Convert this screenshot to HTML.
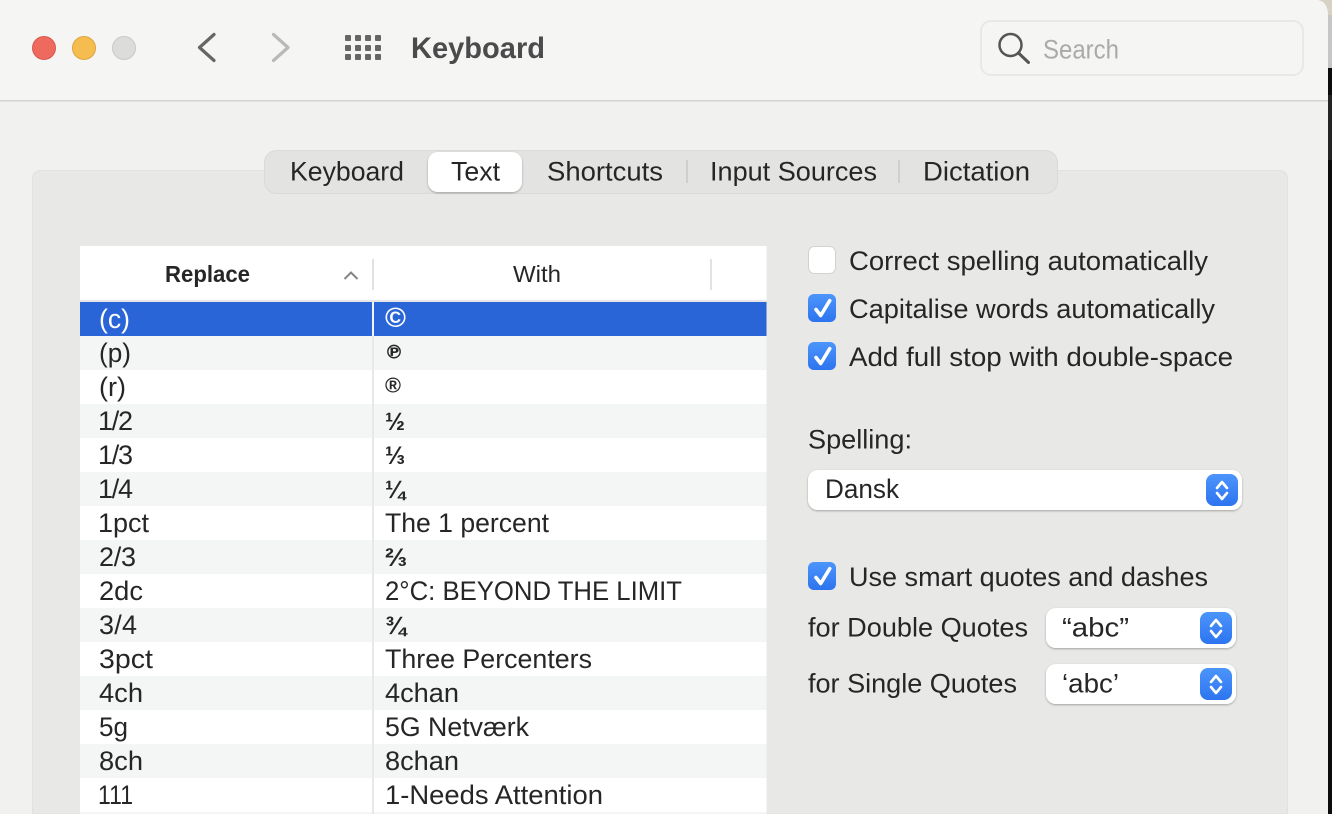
<!DOCTYPE html>
<html><head><meta charset="utf-8"><style>
html,body{margin:0;padding:0;background:#0c0c0c;width:1332px;height:814px;overflow:hidden}
svg{display:block}
text{font-family:"Liberation Sans","DejaVu Sans",sans-serif;font-size:27px;fill:#262626}
.b{font-weight:bold}
.sym{font-family:"DejaVu Sans","Liberation Sans",sans-serif;font-weight:bold;font-size:19px}
.fr{font-family:"Liberation Sans","DejaVu Sans",sans-serif;font-weight:bold;font-size:25px}
</style></head><body>
<svg width="1332" height="814" viewBox="0 0 1332 814" xmlns="http://www.w3.org/2000/svg">
<defs>
<linearGradient id="bl" x1="0" y1="0" x2="0" y2="1"><stop offset="0" stop-color="#4c95fb"/><stop offset="1" stop-color="#2d74ef"/></linearGradient>
<filter id="sh" x="-5%" y="-20%" width="110%" height="150%"><feDropShadow dx="0" dy="1" stdDeviation="1" flood-color="#000" flood-opacity=".3"/></filter>
<symbol id="chk" overflow="visible"><rect width="28" height="28" rx="6" fill="url(#bl)"/><path d="M8 15.500l4.700 6L21.700 6.700" fill="none" stroke="#fff" stroke-width="3.600" stroke-linecap="round" stroke-linejoin="round"/></symbol>
<symbol id="upd" overflow="visible"><rect width="32" height="32" rx="8" fill="url(#bl)"/><path d="M11 14l5-6 5 6M11 19l5 6 5-6" fill="none" stroke="#fff" stroke-width="2.600" stroke-linecap="round" stroke-linejoin="round"/></symbol>
</defs>
<!-- desktop strip -->
<rect x="1300" y="0" width="32" height="15" fill="#d8d2c5"/>
<rect x="1328" y="15" width="4" height="53" fill="#c6c6c6"/>
<rect x="1328" y="68" width="4" height="746" fill="#0c0c0c"/>
<rect x="1328" y="95" width="4" height="65" fill="#232323"/>
<!-- window -->
<path d="M0 0H1318Q1328 2 1328 16V814H0Z" fill="#f1f1f0"/>
<path d="M0 0H1318Q1328 2 1328 16V100H0Z" fill="#f5f5f4"/>
<rect x="0" y="100" width="1328" height="1.500" fill="#d2d2d0"/>
<!-- traffic lights -->
<circle cx="44" cy="48" r="11.500" fill="#ee6a5f" stroke="#d9584e"/>
<circle cx="84" cy="48" r="11.500" fill="#f5bd4f" stroke="#dca43c"/>
<circle cx="124" cy="48" r="11.500" fill="#dcdcdb" stroke="#c8c8c7"/>
<!-- nav -->
<path d="M214 34.500L199.500 47.500L214 60.500" fill="none" stroke="#666" stroke-width="3.200" stroke-linecap="round" stroke-linejoin="round"/>
<path d="M273.500 34.500L288 47.500L273.500 60.500" fill="none" stroke="#b9b9b9" stroke-width="3.200" stroke-linecap="round" stroke-linejoin="round"/>
<g fill="#666">
<rect x="345" y="35" width="6" height="6" rx="1"/><rect x="355" y="35" width="6" height="6" rx="1"/><rect x="365" y="35" width="6" height="6" rx="1"/><rect x="375" y="35" width="6" height="6" rx="1"/>
<rect x="345" y="45" width="6" height="6" rx="1"/><rect x="355" y="45" width="6" height="6" rx="1"/><rect x="365" y="45" width="6" height="6" rx="1"/><rect x="375" y="45" width="6" height="6" rx="1"/>
<rect x="345" y="54" width="6" height="6" rx="1"/><rect x="355" y="54" width="6" height="6" rx="1"/><rect x="365" y="54" width="6" height="6" rx="1"/><rect x="375" y="54" width="6" height="6" rx="1"/>
</g>
<text x="411" y="58" class="b" style="font-size:30px;fill:#4b4b4b" textLength="134" lengthAdjust="spacingAndGlyphs">Keyboard</text>
<!-- search -->
<rect x="981" y="21" width="322" height="54" rx="10" fill="#f5f5f4" stroke="#e8e8e7" stroke-width="2"/>
<circle cx="1010.500" cy="45" r="11" fill="none" stroke="#555" stroke-width="2.500"/>
<path d="M1018.500 53L1028.500 62.500" stroke="#555" stroke-width="3" stroke-linecap="round"/>
<text x="1043" y="58.500" style="fill:#aaaaaa" textLength="76" lengthAdjust="spacingAndGlyphs">Search</text>
<!-- panel -->
<path d="M32.500 814V179.500Q32.500 170.500 41.500 170.500H1278.500Q1287.500 170.500 1287.500 179.500V814Z" fill="#e8e8e7" stroke="#e1e1e0"/>
<!-- tabs -->
<rect x="264.500" y="150.500" width="793" height="43" rx="12" fill="#e3e3e2" stroke="#dadad9"/>
<rect x="428" y="152" width="94" height="40" rx="10" fill="#fff" filter="url(#sh)"/>
<rect x="686" y="160" width="2" height="23" fill="#cfcfce"/>
<rect x="898" y="160" width="2" height="23" fill="#cfcfce"/>
<text x="290" y="180.500" textLength="114" lengthAdjust="spacingAndGlyphs">Keyboard</text>
<text x="451" y="180.500" textLength="49" lengthAdjust="spacingAndGlyphs">Text</text>
<text x="547" y="180.500" textLength="116" lengthAdjust="spacingAndGlyphs">Shortcuts</text>
<text x="710" y="180.500" textLength="167" lengthAdjust="spacingAndGlyphs">Input Sources</text>
<text x="923" y="180.500" textLength="107" lengthAdjust="spacingAndGlyphs">Dictation</text>
<!-- table -->
<rect x="80" y="246" width="686.500" height="568" fill="#fff"/>
<rect x="80" y="300" width="686.500" height="2" fill="#e6e6e6"/>
<rect x="372" y="259" width="2" height="31" fill="#e2e2e2"/>
<rect x="710" y="259" width="2" height="31" fill="#e2e2e2"/>
<text x="165" y="282" class="b" style="font-size:23px" textLength="85" lengthAdjust="spacingAndGlyphs">Replace</text>
<text x="513" y="282" style="font-size:23px" textLength="48" lengthAdjust="spacingAndGlyphs">With</text>
<path d="M344.500 279L351 272.500L357.500 279" fill="none" stroke="#858585" stroke-width="2"/>
<g fill="#f4f5f5">
<rect x="80" y="336" width="686.500" height="34"/><rect x="80" y="404" width="686.500" height="34"/><rect x="80" y="472" width="686.500" height="34"/><rect x="80" y="540" width="686.500" height="34"/><rect x="80" y="608" width="686.500" height="34"/><rect x="80" y="676" width="686.500" height="34"/><rect x="80" y="744" width="686.500" height="34"/><rect x="80" y="812" width="686.500" height="2"/>
</g>
<rect x="372" y="302" width="2" height="512" fill="#e8e8e8"/>
<rect x="80" y="302" width="686.500" height="34" fill="#2a65d8"/>
<rect x="372" y="302" width="2" height="34" fill="#f0f4fb"/>
<text x="99" y="328" style="fill:#fff" textLength="31" lengthAdjust="spacingAndGlyphs">(c)</text>
<text x="385" y="327" class="fr" style="fill:#fff;font-size:28px" textLength="21" lengthAdjust="spacingAndGlyphs">©</text>
<text x="99" y="362" textLength="32" lengthAdjust="spacingAndGlyphs">(p)</text>
<text x="384.500" y="358.500" class="sym">℗</text>
<text x="99" y="396" textLength="27" lengthAdjust="spacingAndGlyphs">(r)</text>
<text x="385" y="392.500" class="fr" style="font-size:21px" textLength="16" lengthAdjust="spacingAndGlyphs">®</text>
<text x="98" y="430" textLength="35" lengthAdjust="spacing">1/2</text>
<text x="385" y="430" class="fr" textLength="20" lengthAdjust="spacingAndGlyphs">½</text>
<text x="98" y="464" textLength="35" lengthAdjust="spacing">1/3</text>
<text x="385" y="464" class="fr" textLength="20" lengthAdjust="spacingAndGlyphs">⅓</text>
<text x="98" y="498" textLength="35" lengthAdjust="spacing">1/4</text>
<text x="385" y="498" class="fr" textLength="20" lengthAdjust="spacingAndGlyphs">¼</text>
<text x="98" y="532" textLength="51" lengthAdjust="spacing">1pct</text>
<text x="385" y="532" textLength="164" lengthAdjust="spacingAndGlyphs">The 1 percent</text>
<text x="99" y="566" textLength="37" lengthAdjust="spacing">2/3</text>
<text x="385" y="566" class="fr" textLength="22" lengthAdjust="spacingAndGlyphs">⅔</text>
<text x="99" y="600" textLength="44" lengthAdjust="spacingAndGlyphs">2dc</text>
<text x="385" y="600" textLength="297" lengthAdjust="spacingAndGlyphs">2°C: BEYOND THE LIMIT</text>
<text x="99" y="634" textLength="38" lengthAdjust="spacing">3/4</text>
<text x="385" y="634" class="fr" textLength="21" lengthAdjust="spacingAndGlyphs">¾</text>
<text x="99" y="668" textLength="54" lengthAdjust="spacingAndGlyphs">3pct</text>
<text x="385" y="668" textLength="207" lengthAdjust="spacingAndGlyphs">Three Percenters</text>
<text x="99" y="702" textLength="44" lengthAdjust="spacingAndGlyphs">4ch</text>
<text x="385" y="702" textLength="74" lengthAdjust="spacingAndGlyphs">4chan</text>
<text x="99" y="736" textLength="29" lengthAdjust="spacingAndGlyphs">5g</text>
<text x="385" y="736" textLength="144" lengthAdjust="spacingAndGlyphs">5G Netværk</text>
<text x="99" y="770" textLength="44" lengthAdjust="spacingAndGlyphs">8ch</text>
<text x="385" y="770" textLength="74" lengthAdjust="spacingAndGlyphs">8chan</text>
<text x="98" y="804" textLength="35" lengthAdjust="spacingAndGlyphs">111</text>
<text x="385" y="804" textLength="218" lengthAdjust="spacingAndGlyphs">1-Needs Attention</text>
<!-- options -->
<rect x="808.500" y="246.500" width="27" height="27" rx="6" fill="#fff" stroke="#d2d2d1"/>
<use href="#chk" x="808" y="294"/>
<use href="#chk" x="808" y="342"/>
<use href="#chk" x="808" y="562"/>
<text x="849" y="270" textLength="359" lengthAdjust="spacingAndGlyphs">Correct spelling automatically</text>
<text x="849" y="318" textLength="366" lengthAdjust="spacingAndGlyphs">Capitalise words automatically</text>
<text x="849" y="366" textLength="384" lengthAdjust="spacingAndGlyphs">Add full stop with double-space</text>
<text x="808" y="448.500" textLength="104" lengthAdjust="spacingAndGlyphs">Spelling:</text>
<rect x="808" y="470" width="434" height="40" rx="10" fill="#fff" filter="url(#sh)"/>
<use href="#upd" x="1206" y="474"/>
<text x="825" y="498" textLength="74" lengthAdjust="spacingAndGlyphs">Dansk</text>
<text x="849" y="586" textLength="359" lengthAdjust="spacingAndGlyphs">Use smart quotes and dashes</text>
<text x="808" y="636.500" textLength="220" lengthAdjust="spacingAndGlyphs">for Double Quotes</text>
<text x="808" y="692.500" textLength="209" lengthAdjust="spacingAndGlyphs">for Single Quotes</text>
<rect x="1046" y="608" width="190" height="40" rx="10" fill="#fff" filter="url(#sh)"/>
<use href="#upd" x="1200" y="612"/>
<text x="1062" y="636.500" textLength="67" lengthAdjust="spacingAndGlyphs">“abc”</text>
<rect x="1046" y="664" width="190" height="40" rx="10" fill="#fff" filter="url(#sh)"/>
<use href="#upd" x="1200" y="668"/>
<text x="1062" y="692.500" textLength="57" lengthAdjust="spacingAndGlyphs">‘abc’</text>
</svg>
</body></html>
